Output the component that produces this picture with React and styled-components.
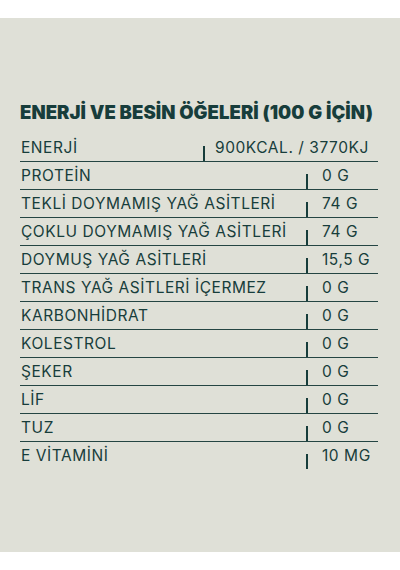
import React from "react";
import styled, { createGlobalStyle } from "styled-components";

const GlobalStyle = createGlobalStyle`
  body {
    margin: 0;
    background: #ffffff;
    font-family: Inter, "Liberation Sans", sans-serif;
  }
`;

const Page = styled.div`
  padding: 18px 0;
`;

const Panel = styled.section`
  height: 534px;
  box-sizing: border-box;
  background: #dfe0d7;
  padding: 82px 22px 0 20px;
  color: #173d3b;
`;

const Title = styled.h2`
  margin: 0 0 10px;
  font-size: 18.5px;
  line-height: 24px;
  font-weight: 900;
  letter-spacing: 0.05px;
  color: #173d3b;
`;

const Table = styled.div`
  display: flex;
  flex-direction: column;
`;

const Row = styled.div`
  display: flex;
  align-items: stretch;
  height: 27px;
  border-bottom: ${(p) => (p.$last ? "none" : "1px solid #244543")};
  font-size: 15.5px;
  letter-spacing: 0.55px;
  line-height: 27px;
`;

const Label = styled.div`
  flex: 1;
  padding-left: 1px;
  white-space: nowrap;
`;

const Value = styled.div`
  position: relative;
  width: ${(p) => (p.$wide ? "175px" : "72px")};
  padding-left: ${(p) => (p.$wide ? "12px" : "16px")};
  box-sizing: border-box;
  white-space: nowrap;

  &::before {
    content: "";
    position: absolute;
    left: 0;
    bottom: 0;
    width: 1.5px;
    height: 15px;
    background: #173d3b;
  }
`;

const rows = [
  ["ENERJİ", "900KCAL. / 3770KJ", true],
  ["PROTEİN", "0 G"],
  ["TEKLİ DOYMAMIŞ YAĞ ASİTLERİ", "74 G"],
  ["ÇOKLU DOYMAMIŞ YAĞ ASİTLERİ", "74 G"],
  ["DOYMUŞ YAĞ ASİTLERİ", "15,5 G"],
  ["TRANS YAĞ ASİTLERİ İÇERMEZ", "0 G"],
  ["KARBONHİDRAT", "0 G"],
  ["KOLESTROL", "0 G"],
  ["ŞEKER", "0 G"],
  ["LİF", "0 G"],
  ["TUZ", "0 G"],
  ["E VİTAMİNİ", "10 MG"],
];

export default function App() {
  return (
    <Page>
      <GlobalStyle />
      <Panel>
        <Title>ENERJİ VE BESİN ÖĞELERİ (100 G İÇİN)</Title>
        <Table>
          {rows.map(([label, value, wide], i) => (
            <Row key={label} $last={i === rows.length - 1}>
              <Label>{label}</Label>
              <Value $wide={wide}>{value}</Value>
            </Row>
          ))}
        </Table>
      </Panel>
    </Page>
  );
}
